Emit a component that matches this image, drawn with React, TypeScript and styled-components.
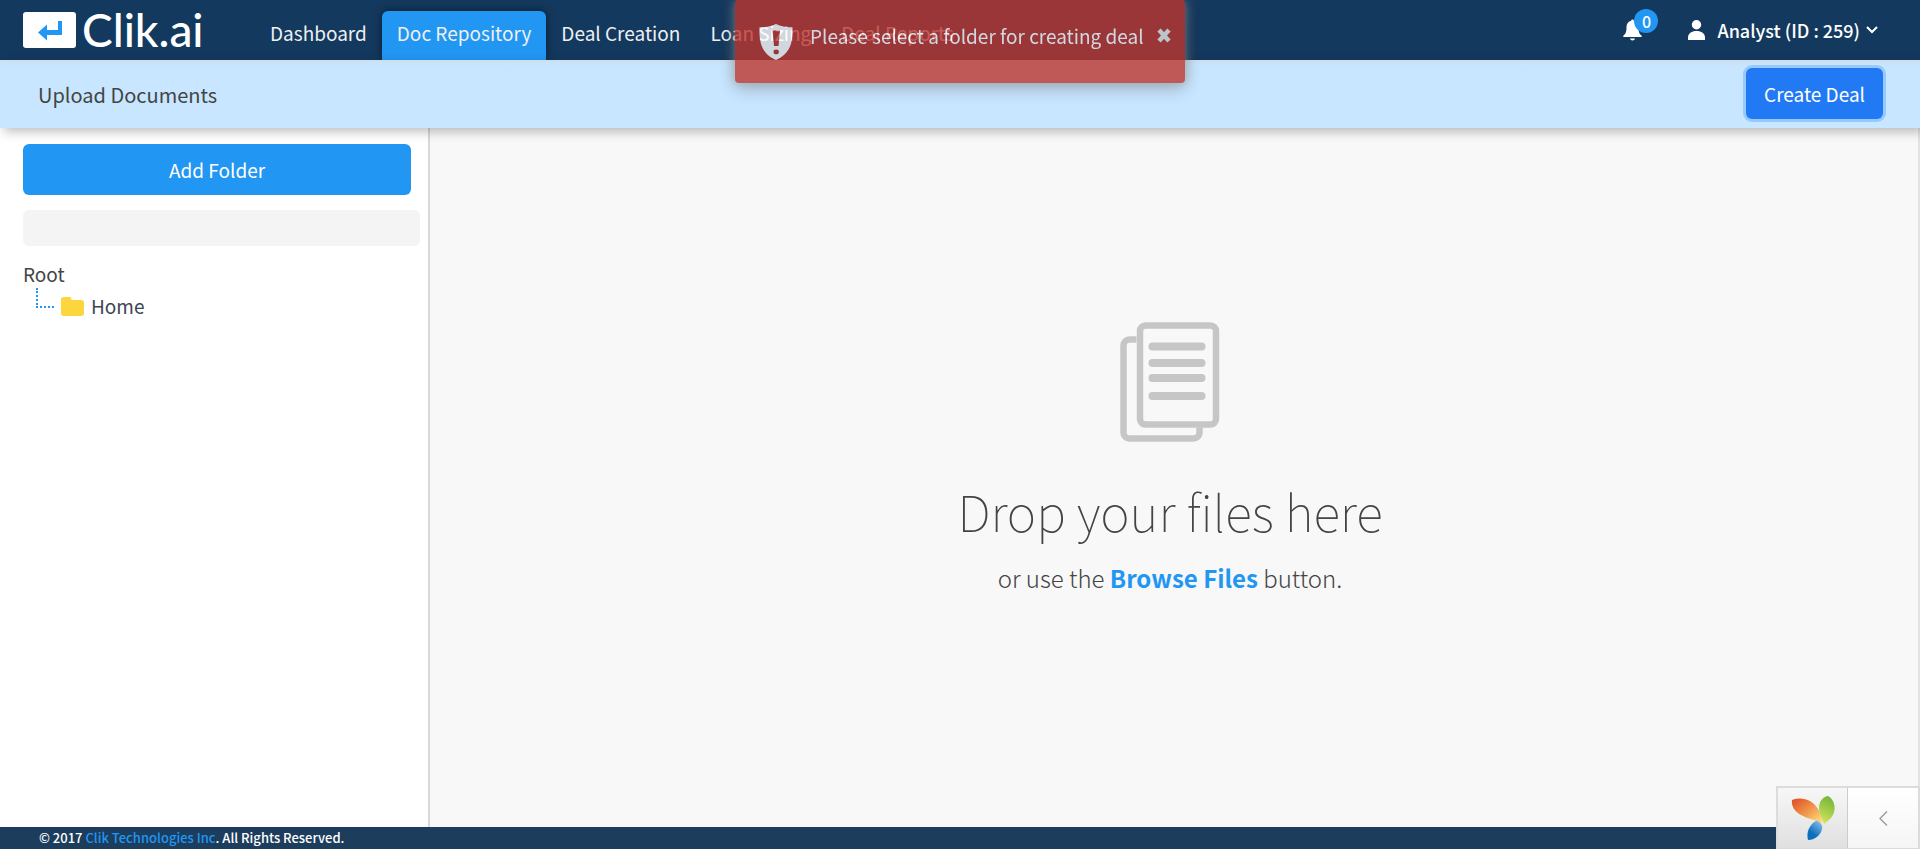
import React from 'react';
import styled, { createGlobalStyle } from 'styled-components';

const GlobalStyle = createGlobalStyle`
  *, *::before, *::after { box-sizing: border-box; }
  body {
    margin: 0;
    background: #f8f8f8;
    color: #444;
    font-family: "Noto Sans CJK SC", "Noto Sans", sans-serif;
    font-size: 19px;
    line-height: 24px;
  }
  button, input { font: inherit; }
  a { text-decoration: none; }
`;

const Page = styled.div`
  display: flex;
  flex-direction: column;
  min-height: 100vh;
`;

const Header = styled.header`
  display: flex;
  align-items: stretch;
  height: 60px;
  padding: 0 42px 0 23px;
  background: #14395e;
`;

const Logo = styled.a`
  display: flex;
  align-items: center;
  gap: 6px;
  width: 232px;
  color: #fff;
`;

const LogoText = styled.span`
  font-family: Lato, sans-serif;
  font-size: 46px;
  font-weight: 500;
  line-height: 60px;
`;

const Nav = styled.nav`
  display: flex;
  align-items: flex-end;
  flex: 1;
`;

const NavLink = styled.a<{ $active?: boolean }>`
  height: 49px;
  padding: 10px 15px 0;
  border-radius: 6px 6px 0 0;
  color: #eef0f2;
  white-space: nowrap;
  background: ${(p) => (p.$active ? '#2196f3' : 'transparent')};
  box-shadow: ${(p) => (p.$active ? '0 0 10px rgba(0, 0, 0, 0.5)' : 'none')};
`;

const HeaderTools = styled.div`
  display: flex;
  align-items: center;
  gap: 46px;
`;

const IconButton = styled.button`
  position: relative;
  display: flex;
  padding: 0;
  border: 0;
  background: none;
  color: #fff;
  cursor: pointer;
`;

const Badge = styled.span`
  position: absolute;
  top: -10px;
  left: 11px;
  width: 24px;
  height: 24px;
  border-radius: 50%;
  background: #2196f3;
  font-size: 16px;
  font-weight: 500;
  line-height: 24px;
  text-align: center;
`;

const UserButton = styled.button`
  display: flex;
  align-items: center;
  gap: 6px;
  padding: 0;
  border: 0;
  background: none;
  color: #fff;
  cursor: pointer;
`;

const UserName = styled.span`
  padding-left: 6px;
  font-size: 18px;
  font-weight: 500;
`;

const TitleBar = styled.div`
  position: relative;
  z-index: 1;
  display: flex;
  align-items: flex-start;
  justify-content: space-between;
  height: 68px;
  padding: 8px 37px 0 38px;
  background: linear-gradient(#cbdfee, #c8e6ff 6px);
  box-shadow: 4px 4px 10px rgba(0, 0, 0, 0.25);
`;

const Title = styled.h1`
  margin: 0;
  font-size: 20px;
  font-weight: 400;
  line-height: 54px;
`;

const Button = styled.button<{ $focused?: boolean }>`
  height: 51px;
  padding: 0 18px;
  border: 0;
  border-radius: 6px;
  color: #fff;
  background: ${(p) => (p.$focused ? '#217af3' : '#2196f3')};
  box-shadow: ${(p) => (p.$focused ? '0 0 0 3px #96caff' : 'none')};
  cursor: pointer;
`;

const Content = styled.div`
  display: flex;
  flex: 1;
`;

const Sidebar = styled.aside`
  display: flex;
  flex-direction: column;
  width: 430px;
  padding: 16px 8px 16px 23px;
  border-right: 2px solid #d8d8d8;
  background: #fff;
`;

const AddFolder = styled(Button)`
  margin-right: 9px;
`;

const Search = styled.input`
  height: 36px;
  margin-top: 15px;
  padding: 0 12px;
  border: 0;
  border-radius: 6px;
  background: #f4f4f4;
`;

const Tree = styled.ul`
  margin: 16px 0 0;
  padding: 0;
  list-style: none;
`;

const TreeBranch = styled.ul`
  margin: 0;
  padding: 0 0 0 13px;
  list-style: none;
`;

const TreeItem = styled.li`
  display: flex;
  align-items: flex-start;
`;

const TreeLine = styled.span`
  width: 18px;
  height: 20px;
  margin: 2px 7px 0 0;
  border-left: 2px dotted #2196f3;
  border-bottom: 2px dotted #2196f3;
`;

const FolderLink = styled.a`
  display: flex;
  align-items: center;
  gap: 7px;
  padding-top: 8px;
  color: #3c4653;
`;

const DropZone = styled.main`
  display: flex;
  flex: 1;
  flex-direction: column;
  align-items: center;
  padding: 194px 8px 0 0;
  border-right: 2px solid #e2e2e2;
  background: #f8f8f8;
`;

const DropTitle = styled.h2`
  margin: 32px 0 0;
  font-size: 50px;
  font-weight: 100;
  line-height: 72px;
`;

const DropHint = styled.p`
  margin: 14px 0 0;
  font-size: 24px;
  font-weight: 300;
  line-height: 36px;
`;

const BrowseLink = styled.a`
  color: #2196f3;
  font-weight: 700;
`;

const Footer = styled.footer`
  height: 22px;
  padding-left: 39px;
  background: #1c3d5c;
  color: #fff;
  font-size: 13px;
  font-weight: 500;
  line-height: 22px;
`;

const FooterLink = styled.a`
  color: #2196f3;
`;

const Toast = styled.div`
  position: fixed;
  z-index: 3;
  top: 0;
  left: 50%;
  display: flex;
  align-items: flex-start;
  width: 450px;
  height: 83px;
  padding: 24px 14px 0 24px;
  border-radius: 4px;
  background: #bd362f;
  box-shadow: 0 0 12px #999, 0 6px 18px rgba(0, 0, 0, 0.25);
  color: #fff;
  opacity: 0.8;
  transform: translateX(-50%);
`;

const ToastText = styled.span`
  flex: 1;
  padding-left: 17px;
  white-space: nowrap;
`;

const CloseButton = styled.button`
  display: flex;
  margin-top: 4px;
  padding: 0;
  border: 0;
  background: none;
  color: #e6e6e6;
  cursor: pointer;
`;

const DebugBar = styled.div`
  position: fixed;
  z-index: 2;
  right: 0;
  bottom: 0;
  display: flex;
  width: 144px;
  height: 63px;
  border: 2px solid #dcdcdc;
  border-bottom-width: 1px;
  background: linear-gradient(#fff, #f5f5f5);
`;

const DebugButton = styled.button<{ $logo?: boolean }>`
  display: flex;
  align-items: center;
  justify-content: center;
  flex: ${(p) => (p.$logo ? '0 0 70px' : '1')};
  padding: 0;
  border: 0;
  border-right: ${(p) => (p.$logo ? '1px solid #ccc' : '0')};
  background: ${(p) => (p.$logo ? 'linear-gradient(#f7f7f7, #e0e0e0)' : 'none')};
  cursor: pointer;
`;

const NAV_ITEMS = ['Dashboard', 'Doc Repository', 'Deal Creation', 'Loan Sizing', 'Deal Reports'];

const LogoMark = () => (
  <svg width="53" height="36" viewBox="0 0 53 36" aria-hidden="true">
    <rect width="53" height="36" rx="3" fill="#fff" />
    <path d="M35 9h4v14H24v5.500L15 20.500l9-8V18h11z" fill="#2196f3" />
  </svg>
);

const BellIcon = () => (
  <svg width="19" height="22" viewBox="0 0 19 22" aria-hidden="true">
    <path
      d="M9.500 0.500c.8 0 1.300.5 1.300 1.300 3 .7 4.700 3 4.700 6.200 0 5 .8 7 3.200 8.700v1.300H.3v-1.300C2.700 15 3.500 13 3.500 8c0-3.200 1.700-5.500 4.700-6.200 0-.8.5-1.300 1.300-1.300zM7 19.500h5c-.3 1.200-1.200 2-2.500 2S7.300 20.700 7 19.500z"
      fill="currentColor"
    />
  </svg>
);

const PersonIcon = () => (
  <svg width="17" height="20" viewBox="0 0 17 20" aria-hidden="true">
    <circle cx="8.500" cy="4.700" r="4.700" fill="currentColor" />
    <path d="M0 20v-2.500C0 13.500 3.500 11 8.500 11s8.500 2.500 8.500 6.500V20z" fill="currentColor" />
  </svg>
);

const ChevronDown = () => (
  <svg width="12" height="8" viewBox="0 0 12 8" aria-hidden="true">
    <path d="M1 1l5 5 5-5" fill="none" stroke="currentColor" strokeWidth="2" />
  </svg>
);

const ShieldIcon = () => (
  <svg width="34" height="36" viewBox="0 0 34 36" aria-hidden="true">
    <path
      fillRule="evenodd"
      d="M17 0c4.500 2.500 10 3.300 16.500 3.300C34 19 31 30 17 36 3 30 0 19 .5 3.300 7 3.300 12.500 2.500 17 0zM13.500 6.500l1.500 15.500h4.500l1.500-15.500zM17.200 25.500a2.700 2.400 0 100 4.800 2.700 2.400 0 000-4.800z"
      fill="#fff"
    />
  </svg>
);

const CloseIcon = () => (
  <svg width="14" height="15" viewBox="0 0 14 15" aria-hidden="true">
    <path d="M2 2l10 11M12 2L2 13" stroke="currentColor" strokeWidth="4.500" />
  </svg>
);

const FolderIcon = () => (
  <svg width="23" height="19" viewBox="0 0 23 19" aria-hidden="true">
    <path
      d="M2.500 0h6C10 0 10.500 1 10.500 3h10C22 3 23 4 23 5.500v11c0 1.500-1 2.500-2.500 2.500h-18C1 19 0 18 0 16.500v-14C0 1 1 0 2.500 0z"
      fill="#fcd53f"
    />
  </svg>
);

const DocumentsIcon = () => (
  <svg width="100" height="120" viewBox="0 0 100 120" fill="none" stroke="#c6c6c6" aria-hidden="true">
    <path d="M16.500 17.500H9.500a6 6 0 00-6 6v87a6 6 0 006 6h64a6 6 0 006-6v-5" strokeWidth="6.500" />
    <rect x="20" y="3.500" width="76" height="99" rx="5.500" strokeWidth="6.500" />
    <path d="M32.500 24.500h49M32.500 41h49M32.500 56h49M32.500 74h49" strokeWidth="8" strokeLinecap="round" />
  </svg>
);

const YiiIcon = () => (
  <svg width="44" height="46" viewBox="0 0 44 46" aria-hidden="true">
    <defs>
      <linearGradient id="leafOrange" x1="0" y1="0" x2="1" y2="1">
        <stop offset="0" stopColor="#dd4b23" />
        <stop offset="0.500" stopColor="#f0934a" />
        <stop offset="1" stopColor="#fde97f" />
      </linearGradient>
      <linearGradient id="leafGreen" x1="0.600" y1="0" x2="0.300" y2="1">
        <stop offset="0" stopColor="#72b63a" />
        <stop offset="1" stopColor="#d5e35c" />
      </linearGradient>
      <linearGradient id="leafBlue" x1="0.800" y1="0" x2="0.200" y2="1">
        <stop offset="0" stopColor="#8fc0ea" />
        <stop offset="0.700" stopColor="#0b6fbd" />
      </linearGradient>
    </defs>
    <path d="M26 25c4 3 6 5 5 9-1 6-7 11-14 11-2-8 1-15 9-20z" fill="url(#leafBlue)" />
    <path d="M1 5c14-5 28 3 31 23C22 24 17 24 10 20 4 17 0 11 1 5z" fill="url(#leafOrange)" />
    <path d="M37 1c7 4 8 13 5 19-2 4-6 6-9 9-1-6-5-9-5-16 0-6 3-11 9-12z" fill="url(#leafGreen)" />
  </svg>
);

const ChevronLeft = () => (
  <svg width="9" height="15" viewBox="0 0 9 15" aria-hidden="true">
    <path d="M8 .5l-7 7 7 7" fill="none" stroke="#999" strokeWidth="1.300" />
  </svg>
);

export default function App() {
  return (
    <Page>
      <GlobalStyle />
      <Header>
        <Logo href="#">
          <LogoMark />
          <LogoText>Clik.ai</LogoText>
        </Logo>
        <Nav>
          {NAV_ITEMS.map((item) => (
            <NavLink key={item} href="#" $active={item === 'Doc Repository'}>
              {item}
            </NavLink>
          ))}
        </Nav>
        <HeaderTools>
          <IconButton aria-label="Notifications">
            <BellIcon />
            <Badge>0</Badge>
          </IconButton>
          <UserButton>
            <PersonIcon />
            <UserName>Analyst (ID : 259)</UserName>
            <ChevronDown />
          </UserButton>
        </HeaderTools>
      </Header>
      <TitleBar>
        <Title>Upload Documents</Title>
        <Button $focused>Create Deal</Button>
      </TitleBar>
      <Content>
        <Sidebar>
          <AddFolder>Add Folder</AddFolder>
          <Search type="text" aria-label="Search folders" />
          <Tree>
            <li>
              Root
              <TreeBranch>
                <TreeItem>
                  <TreeLine />
                  <FolderLink href="#">
                    <FolderIcon />
                    Home
                  </FolderLink>
                </TreeItem>
              </TreeBranch>
            </li>
          </Tree>
        </Sidebar>
        <DropZone>
          <DocumentsIcon />
          <DropTitle>Drop your files here</DropTitle>
          <DropHint>
            or use the <BrowseLink href="#">Browse Files</BrowseLink> button.
          </DropHint>
        </DropZone>
      </Content>
      <Footer>
        © 2017 <FooterLink href="#">Clik Technologies Inc</FooterLink>. All Rights Reserved.
      </Footer>
      <Toast role="alert">
        <ShieldIcon />
        <ToastText>Please select a folder for creating deal</ToastText>
        <CloseButton aria-label="Close">
          <CloseIcon />
        </CloseButton>
      </Toast>
      <DebugBar>
        <DebugButton $logo aria-label="Debugger">
          <YiiIcon />
        </DebugButton>
        <DebugButton aria-label="Expand toolbar">
          <ChevronLeft />
        </DebugButton>
      </DebugBar>
    </Page>
  );
}
